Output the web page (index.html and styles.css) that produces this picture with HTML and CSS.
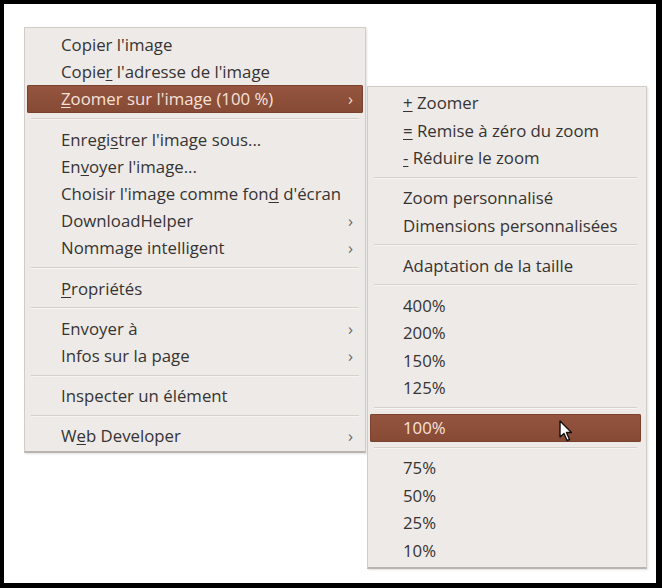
FILE: index.html
```html
<!DOCTYPE html>
<html lang="fr">
<head>
    <meta charset="UTF-8">
    <title>Menu contextuel</title>
    <link rel="stylesheet" href="styles.css">
</head>
<body>
    <div class="screen">
        <div class="menu main-menu">
            <div class="item"><span>Copier l'ima<u>g</u>e</span></div>
            <div class="item"><span>Copie<u>r</u> l'adresse de l'image</span></div>
            <div class="item active"><span><u>Z</u>oomer sur l'image (100 %)</span><span class="arrow">›</span></div>
            <div class="sep"></div>
            <div class="item"><span>Enregi<u>s</u>trer l'image sous...</span></div>
            <div class="item"><span>En<u>v</u>oyer l'image...</span></div>
            <div class="item"><span>Choisir l'image comme fon<u>d</u> d'écran</span></div>
            <div class="item"><span>DownloadHelper</span><span class="arrow">›</span></div>
            <div class="item"><span>Nommage intelligent</span><span class="arrow">›</span></div>
            <div class="sep"></div>
            <div class="item"><span><u>P</u>ropriétés</span></div>
            <div class="sep"></div>
            <div class="item"><span>Envoyer à</span><span class="arrow">›</span></div>
            <div class="item"><span>Infos sur la page</span><span class="arrow">›</span></div>
            <div class="sep"></div>
            <div class="item"><span>Inspecter un élément</span></div>
            <div class="sep"></div>
            <div class="item"><span>W<u>e</u>b Developer</span><span class="arrow">›</span></div>
        </div>

        <div class="menu sub-menu">
            <div class="item"><span><u>+</u> Zoomer</span></div>
            <div class="item"><span><u>=</u> Remise à zéro du zoom</span></div>
            <div class="item"><span><u>-</u> Réduire le zoom</span></div>
            <div class="sep"></div>
            <div class="item"><span>Zoom personnalisé</span></div>
            <div class="item"><span>Dimensions personnalisées</span></div>
            <div class="sep"></div>
            <div class="item"><span>Adaptation de la taille</span></div>
            <div class="sep"></div>
            <div class="item"><span>400%</span></div>
            <div class="item"><span>200%</span></div>
            <div class="item"><span>150%</span></div>
            <div class="item"><span>125%</span></div>
            <div class="sep"></div>
            <div class="item active">
                <span>100%</span>
                <svg class="cursor" width="14" height="22" viewBox="0 0 14 22">
                    <path d="M1 1 L1 17 L5 13.5 L8 20.5 L10.5 19.5 L7.5 12.5 L12.5 12.5 Z" fill="#fff" stroke="#111" stroke-width="1.4" stroke-linejoin="round"/>
                </svg>
            </div>
            <div class="sep"></div>
            <div class="item"><span>75%</span></div>
            <div class="item"><span>50%</span></div>
            <div class="item"><span>25%</span></div>
            <div class="item"><span>10%</span></div>
        </div>
    </div>
</body>
</html>
```

FILE: styles.css
```css
body {
    margin: 0;
    padding: 0;
    background-color: #000;
    font-family: "Open Sans", "DejaVu Sans", sans-serif;
}

.screen {
    position: relative;
    width: 662px;
    height: 588px;
    box-sizing: border-box;
    border-style: solid;
    border-color: #000;
    border-width: 4px 6px 5px 4px;
    background-color: #fff;
}

.menu {
    position: absolute;
    box-sizing: border-box;
    background-color: #eeeae7;
    border: 1px solid #d2ccc7;
    border-bottom: 2px solid #b9b4b0;
    box-shadow: 1px 1px 2px rgba(0, 0, 0, 0.12);
}

.main-menu {
    left: 20px;
    top: 23px;
    width: 342px;
    padding: 3px 2px 2px 2px;
}

.sub-menu {
    left: 363px;
    top: 82px;
    width: 280px;
    padding: 2px 5px 3px 2px;
}

.item {
    display: flex;
    align-items: center;
    justify-content: space-between;
    height: 27.2px;
    padding: 0 10px 0 34px;
    font-size: 16.8px;
    color: #363433;
    white-space: nowrap;
}

.sub-menu .item {
    height: 27.5px;
    padding-left: 33px;
}

.item u {
    text-decoration-thickness: 1px;
    text-underline-offset: 2px;
}

.item.active {
    background: linear-gradient(#955540, #864a34);
    border-radius: 2px;
    box-shadow: inset 0 0 0 1px #7a412d;
    color: #f6e2da;
}

.arrow {
    font-size: 17px;
    color: #6d6a68;
}

.item.active .arrow {
    color: #f0d8cf;
}

.sep {
    height: 1px;
    margin: 5.5px 4px;
    background-color: #d7d1cc;
    border-bottom: 1px solid #f7f4f2;
}

.sub-menu .sep {
    margin: 5px 4px 5.5px 4px;
}

.cursor {
    margin-right: 58px;
    margin-top: 6px;
}
```
